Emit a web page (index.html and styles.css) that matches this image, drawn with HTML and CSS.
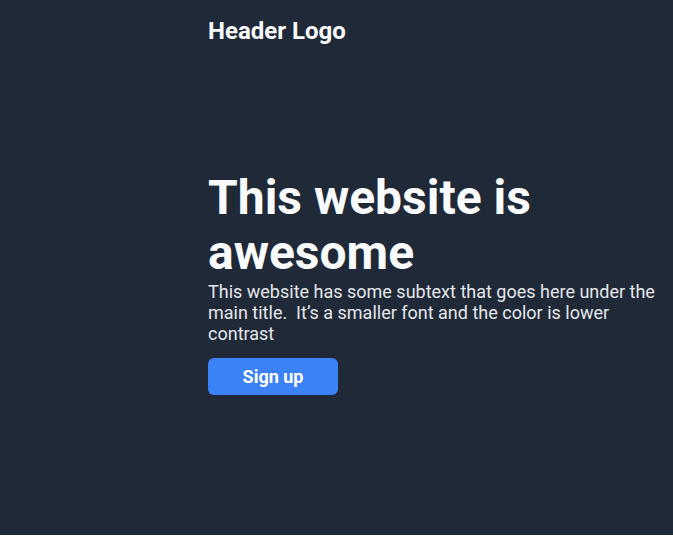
FILE: index.html
```html
<!DOCTYPE html>
<html lang="en">
<head>
<meta charset="utf-8">
<title>This website is awesome</title>
<link rel="stylesheet" href="styles.css">
</head>
<body>
<div class="page">
  <header class="header">
    <div class="logo">Header Logo</div>
  </header>
  <main class="hero">
    <h1 class="title">This website is awesome</h1>
    <p class="subtext">This website has some subtext that goes here under the main title.&nbsp; It’s a smaller font and the color is lower contrast</p>
    <a class="btn" href="#">Sign up</a>
  </main>
</div>
</body>
</html>
```

FILE: styles.css
```css
html, body {
  margin: 0;
  padding: 0;
  background: #ffffff;
}

body {
  font-family: Roboto, "Liberation Sans", sans-serif;
}

.page {
  height: 535px;
  background: #1f2937;
  padding: 0 8px 0 208px;
  box-sizing: border-box;
}

.header {
  padding-top: 17px;
}

.logo {
  font-size: 24px;
  font-weight: 700;
  color: #f9fafb;
  line-height: 28px;
}

.hero {
  margin-top: 125px;
  display: flex;
  flex-direction: column;
  align-items: flex-start;
}

.title {
  margin: 0;
  font-size: 48px;
  font-weight: 700;
  line-height: 1.15;
  color: #f9fafb;
}

.subtext {
  margin: 2px 0 0;
  font-size: 18px;
  line-height: 1.15;
  color: #e5e7eb;
}

.btn {
  margin-top: 14px;
  display: block;
  width: 130px;
  box-sizing: border-box;
  padding: 8px 0;
  text-align: center;
  background: #3b82f6;
  color: #ffffff;
  font-size: 18px;
  font-weight: 700;
  line-height: 21px;
  border-radius: 6px;
  text-decoration: none;
}
```
